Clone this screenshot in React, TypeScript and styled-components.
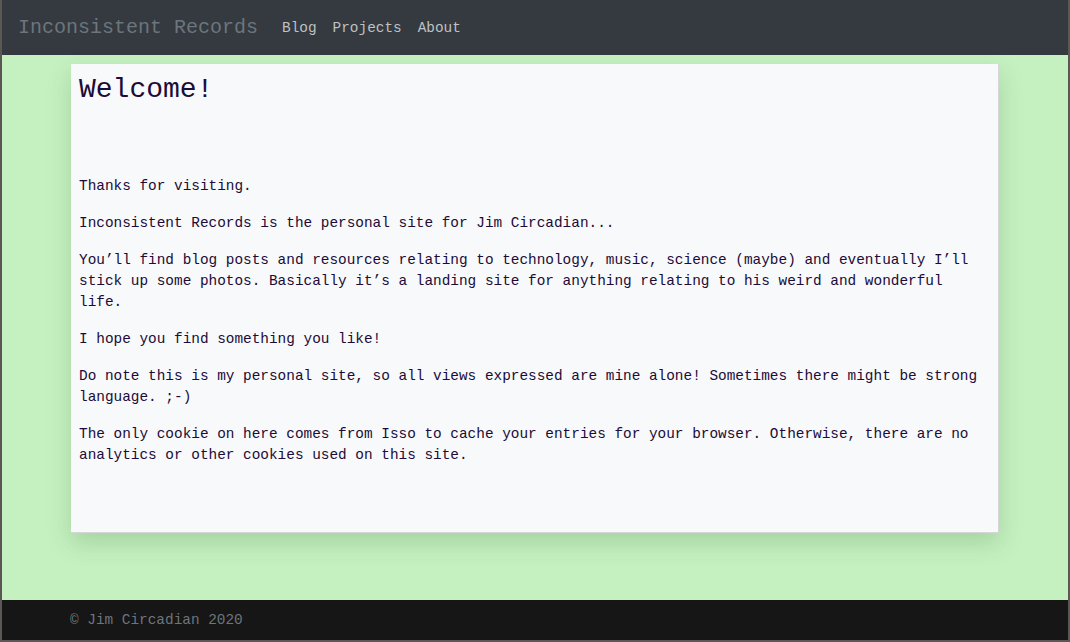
import React from "react";
import styled, { createGlobalStyle } from "styled-components";

const Global = createGlobalStyle`
  html, body { margin: 0; padding: 0; }
  body { font-family: "Liberation Mono", "DejaVu Sans Mono", monospace; }
  * { box-sizing: border-box; }
`;

const Frame = styled.div`
  width: 1070px;
  height: 642px;
  border: 2px solid #5b5754;
  border-top: none;
  display: flex;
  flex-direction: column;
  background: #c5f0c0;
  overflow: hidden;
`;

const NavBar = styled.header`
  height: 55px;
  flex: none;
  background: #343a40;
  display: flex;
  align-items: center;
  padding: 0 16px;
  gap: 24px;
`;

const Brand = styled.a`
  font-size: 20px;
  color: #6c757d;
  text-decoration: none;
`;

const NavLinks = styled.nav`
  display: flex;
  gap: 16px;
  padding-top: 1px;
`;

const NavLink = styled.a`
  font-size: 14.4px;
  color: #bfc1c3;
  text-decoration: none;
`;

const Main = styled.main`
  flex: 1;
  display: flex;
  justify-content: center;
  align-items: flex-start;
  padding-top: 9px;
`;

const Card = styled.article`
  width: 928px;
  height: 469px;
  background: #f8f9fa;
  padding: 8px 8px;
  border-right: 1px solid #d6d6d6;
  border-bottom: 1px solid #d6d6d6;
  box-shadow: 0 10px 22px rgba(60, 110, 60, 0.22);
  color: #200b38;
`;

const Title = styled.h1`
  font-size: 28px;
  font-weight: normal;
  margin: 2px 0 70px 0;
  line-height: 32px;
`;

const Para = styled.p`
  font-size: 14.4px;
  line-height: 21px;
  margin: 0 0 16px 0;
`;

const Footer = styled.footer`
  height: 40px;
  flex: none;
  background: #161616;
  color: #6c757d;
  font-size: 14.4px;
  display: flex;
  align-items: center;
  padding-left: 68px;
`;

export default function App() {
  return (
    <>
      <Global />
      <Frame>
        <NavBar>
          <Brand href="#">Inconsistent Records</Brand>
          <NavLinks>
            <NavLink href="#">Blog</NavLink>
            <NavLink href="#">Projects</NavLink>
            <NavLink href="#">About</NavLink>
          </NavLinks>
        </NavBar>
        <Main>
          <Card>
            <Title>Welcome!</Title>
            <Para>Thanks for visiting.</Para>
            <Para>Inconsistent Records is the personal site for Jim Circadian...</Para>
            <Para>
              You’ll find blog posts and resources relating to technology, music, science (maybe) and eventually I’ll stick up some photos. Basically it’s a landing site for anything relating to his weird and wonderful life.
            </Para>
            <Para>I hope you find something you like!</Para>
            <Para>
              Do note this is my personal site, so all views expressed are mine alone! Sometimes there might be strong language. ;-)
            </Para>
            <Para>
              The only cookie on here comes from Isso to cache your entries for your browser. Otherwise, there are no analytics or other cookies used on this site.
            </Para>
          </Card>
        </Main>
        <Footer>© Jim Circadian 2020</Footer>
      </Frame>
    </>
  );
}
